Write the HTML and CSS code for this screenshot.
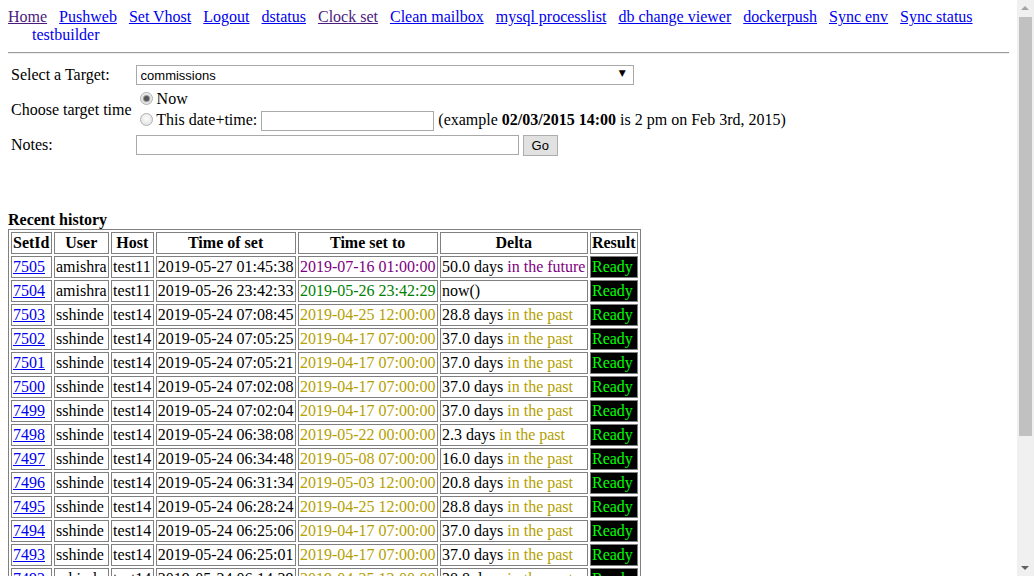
FILE: index.html
```html
<!DOCTYPE html>
<html>
<head>
<meta charset="utf-8">
<title>Clock set</title>
<link rel="stylesheet" href="styles.css">
</head>
<body>
<div class="nav">
<a class="visited" href="#">Home</a>
<a href="#">Pushweb</a>
<a href="#">Set Vhost</a>
<a href="#">Logout</a>
<a href="#">dstatus</a>
<a class="visited" href="#">Clock set</a>
<a href="#">Clean mailbox</a>
<a href="#">mysql processlist</a>
<a href="#">db change viewer</a>
<a href="#">dockerpush</a>
<a href="#">Sync env</a>
<a href="#">Sync status</a>
<span class="plain">testbuilder</span>
</div>
<hr class="rule">
<form>
<table class="form">
<tr>
<td>Select a Target:</td>
<td><span class="selwrap"><select class="target"><option>commissions</option></select></span></td>
</tr>
<tr>
<td>Choose target time</td>
<td>
<div class="opt"><input type="radio" name="t" checked> Now</div>
<div class="opt opt2"><input type="radio" name="t"> This date+time: <input type="text" class="date"> (example <b>02/03/2015 14:00</b> is 2 pm on Feb 3rd, 2015)</div>
</td>
</tr>
<tr>
<td>Notes:</td>
<td><input type="text" class="notes"> <button type="button" class="go">Go</button></td>
</tr>
</table>
</form>
<div class="title">Recent history</div>
<table class="hist" border="1">
<tr><th>SetId</th><th>User</th><th>Host</th><th>Time of set</th><th>Time set to</th><th>Delta</th><th>Result</th></tr>
<tr><td><a href="#">7505</a></td><td>amishra</td><td>test11</td><td>2019-05-27 01:45:38</td><td class="fut">2019-07-16 01:00:00</td><td>50.0 days <span class="fut">in the future</span></td><td class="ok">Ready</td></tr>
<tr><td><a href="#">7504</a></td><td>amishra</td><td>test11</td><td>2019-05-26 23:42:33</td><td class="now">2019-05-26 23:42:29</td><td>now()</td><td class="ok">Ready</td></tr>
<tr><td><a href="#">7503</a></td><td>sshinde</td><td>test14</td><td>2019-05-24 07:08:45</td><td class="past">2019-04-25 12:00:00</td><td>28.8 days <span class="past">in the past</span></td><td class="ok">Ready</td></tr>
<tr><td><a href="#">7502</a></td><td>sshinde</td><td>test14</td><td>2019-05-24 07:05:25</td><td class="past">2019-04-17 07:00:00</td><td>37.0 days <span class="past">in the past</span></td><td class="ok">Ready</td></tr>
<tr><td><a href="#">7501</a></td><td>sshinde</td><td>test14</td><td>2019-05-24 07:05:21</td><td class="past">2019-04-17 07:00:00</td><td>37.0 days <span class="past">in the past</span></td><td class="ok">Ready</td></tr>
<tr><td><a href="#">7500</a></td><td>sshinde</td><td>test14</td><td>2019-05-24 07:02:08</td><td class="past">2019-04-17 07:00:00</td><td>37.0 days <span class="past">in the past</span></td><td class="ok">Ready</td></tr>
<tr><td><a href="#">7499</a></td><td>sshinde</td><td>test14</td><td>2019-05-24 07:02:04</td><td class="past">2019-04-17 07:00:00</td><td>37.0 days <span class="past">in the past</span></td><td class="ok">Ready</td></tr>
<tr><td><a href="#">7498</a></td><td>sshinde</td><td>test14</td><td>2019-05-24 06:38:08</td><td class="past">2019-05-22 00:00:00</td><td>2.3 days <span class="past">in the past</span></td><td class="ok">Ready</td></tr>
<tr><td><a href="#">7497</a></td><td>sshinde</td><td>test14</td><td>2019-05-24 06:34:48</td><td class="past">2019-05-08 07:00:00</td><td>16.0 days <span class="past">in the past</span></td><td class="ok">Ready</td></tr>
<tr><td><a href="#">7496</a></td><td>sshinde</td><td>test14</td><td>2019-05-24 06:31:34</td><td class="past">2019-05-03 12:00:00</td><td>20.8 days <span class="past">in the past</span></td><td class="ok">Ready</td></tr>
<tr><td><a href="#">7495</a></td><td>sshinde</td><td>test14</td><td>2019-05-24 06:28:24</td><td class="past">2019-04-25 12:00:00</td><td>28.8 days <span class="past">in the past</span></td><td class="ok">Ready</td></tr>
<tr><td><a href="#">7494</a></td><td>sshinde</td><td>test14</td><td>2019-05-24 06:25:06</td><td class="past">2019-04-17 07:00:00</td><td>37.0 days <span class="past">in the past</span></td><td class="ok">Ready</td></tr>
<tr><td><a href="#">7493</a></td><td>sshinde</td><td>test14</td><td>2019-05-24 06:25:01</td><td class="past">2019-04-17 07:00:00</td><td>37.0 days <span class="past">in the past</span></td><td class="ok">Ready</td></tr>
<tr><td><a href="#">7492</a></td><td>sshinde</td><td>test14</td><td>2019-05-24 06:14:39</td><td class="past">2019-04-25 12:00:00</td><td>28.8 days <span class="past">in the past</span></td><td class="ok">Ready</td></tr>
<tr><td><a href="#">7491</a></td><td>sshinde</td><td>test14</td><td>2019-05-24 06:10:12</td><td class="past">2019-04-17 07:00:00</td><td>37.0 days <span class="past">in the past</span></td><td class="ok">Ready</td></tr>
<tr><td><a href="#">7490</a></td><td>sshinde</td><td>test14</td><td>2019-05-24 06:05:47</td><td class="past">2019-04-17 07:00:00</td><td>37.0 days <span class="past">in the past</span></td><td class="ok">Ready</td></tr>
<tr><td><a href="#">7489</a></td><td>sshinde</td><td>test14</td><td>2019-05-24 05:58:20</td><td class="past">2019-04-25 12:00:00</td><td>28.7 days <span class="past">in the past</span></td><td class="ok">Ready</td></tr>
<tr><td><a href="#">7488</a></td><td>sshinde</td><td>test14</td><td>2019-05-24 05:51:03</td><td class="past">2019-05-22 00:00:00</td><td>2.2 days <span class="past">in the past</span></td><td class="ok">Ready</td></tr>
<tr><td><a href="#">7487</a></td><td>sshinde</td><td>test14</td><td>2019-05-24 05:44:36</td><td class="past">2019-05-08 07:00:00</td><td>15.9 days <span class="past">in the past</span></td><td class="ok">Ready</td></tr>
<tr><td><a href="#">7486</a></td><td>sshinde</td><td>test14</td><td>2019-05-24 05:39:11</td><td class="past">2019-05-03 12:00:00</td><td>20.7 days <span class="past">in the past</span></td><td class="ok">Ready</td></tr>
</table>
<div class="scrollbar" aria-hidden="true">
<span class="sb-up"></span>
<span class="sb-thumb"></span>
<span class="sb-down"></span>
</div>
</body>
</html>
```
FILE: styles.css
```css
body {
  margin: 8px 25px 8px 8px;
  font-family: "Liberation Serif", "Times New Roman", serif;
  font-size: 16px;
  color: #000;
  background: #fff;
}
a {
  color: #0000ee;
}
a.visited {
  color: #4b1a7d;
}
.nav {
  padding-left: 24px;
  text-indent: -24px;
  line-height: 18px;
}
.nav a {
  margin-right: 8px;
}
.plain {
  color: #0000ee;
}
.rule {
  margin: 8px 0;
  border: 0;
  border-top: 1px solid #9a9a9a;
  border-bottom: 1px solid #eeeeee;
  height: 0;
}
form {
  margin: 0;
}
.form {
  border-spacing: 2px;
}
.form td {
  padding: 1px;
  vertical-align: middle;
}
.opt {
  line-height: 20px;
}
.opt2 {
  margin-top: 1px;
}
.opt input[type=radio] {
  appearance: none;
  -webkit-appearance: none;
  box-sizing: border-box;
  width: 13px;
  height: 13px;
  margin: 0 0 0 4px;
  border: 1px solid #b0b0b0;
  border-radius: 50%;
  background: radial-gradient(circle at 50% 40%, #fdfdfd, #dcdcdc);
  vertical-align: -1px;
  position: relative;
}
.opt input[type=radio]:checked::after {
  content: "";
  position: absolute;
  left: 3px;
  top: 3px;
  width: 5px;
  height: 5px;
  border-radius: 50%;
  background: #555;
  box-shadow: 0 0 1px 1px #8a8a8a;
}
.selwrap {
  position: relative;
  display: inline-block;
  vertical-align: middle;
}
.selwrap::after {
  content: "\25BC";
  position: absolute;
  right: 8px;
  top: 3px;
  font-family: "DejaVu Sans", sans-serif;
  font-size: 9px;
  color: #000;
  pointer-events: none;
}
.target {
  appearance: none;
  -webkit-appearance: none;
  display: block;
  width: 498px;
  height: 20px;
  padding: 0 0 0 4px;
  font-family: "Liberation Sans", Arial, sans-serif;
  font-size: 13px;
  color: #000;
  border: 1px solid #a9a9a9;
  border-radius: 0;
  background: #fff;
}
.date,
.notes {
  height: 16px;
  border: 1px solid #a9a9a9;
  padding: 1px 2px;
  font-size: 13px;
}
.date {
  width: 167px;
}
.notes {
  width: 377px;
}
.go {
  font-family: "Liberation Sans", Arial, sans-serif;
  font-size: 13px;
  height: 21px;
  padding: 1px 8px;
  border: 1px solid #adadad;
  background: #e1e1e1;
  color: #000;
}
.title {
  margin-top: 52px;
  font-weight: bold;
  line-height: 18px;
}
.hist {
  border-spacing: 2px;
  border: 1px solid #808080;
}
.hist th,
.hist td {
  padding: 1px 1.5px 1px 1px;
  border: 1px solid #808080;
  white-space: nowrap;
  line-height: 18px;
}
.hist td {
  text-align: left;
}
.fut {
  color: #800080;
}
.now {
  color: #008000;
}
.past {
  color: #b5a000;
}
.hist td.ok {
  background: #000;
  color: #00ff00;
}
.scrollbar {
  position: fixed;
  top: 0;
  right: 0;
  width: 17px;
  height: 100%;
  background: #f0f0f0;
}
.sb-up,
.sb-down {
  position: absolute;
  left: 4px;
  width: 0;
  height: 0;
  border-left: 4px solid transparent;
  border-right: 4px solid transparent;
}
.sb-up {
  top: 6px;
  border-bottom: 4px solid #a3a3a3;
}
.sb-down {
  bottom: 6px;
  border-top: 4px solid #606060;
}
.sb-thumb {
  position: absolute;
  top: 17px;
  left: 2px;
  width: 13px;
  height: 419px;
  background: #c1c1c1;
}
```
